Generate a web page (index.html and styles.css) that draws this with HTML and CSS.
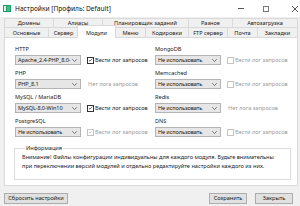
FILE: index.html
```html
<!DOCTYPE html>
<html lang="ru">
<head>
<meta charset="utf-8">
<title>Настройки</title>
<link rel="stylesheet" href="styles.css">
</head>
<body>
<div class="window">
  <div class="titlebar">
    <svg class="app-icon" viewBox="0 0 8 7" width="8" height="7">
      <rect x="0" y="0" width="8" height="7" fill="#1f9a6a"/>
      <rect x="1" y="1" width="2" height="5" fill="#dff3ea"/>
      <rect x="4" y="1" width="3" height="5" fill="#3cc08a"/>
    </svg>
    <span class="title">Настройки [Профиль: Default]</span>
    <div class="controls">
      <span class="ctl"><svg viewBox="0 0 6 1" width="6" height="1"><rect width="6" height="1" fill="#555"/></svg></span>
      <span class="ctl"><svg viewBox="0 0 6 6" width="6" height="6"><rect x="0.5" y="0.5" width="5" height="5" fill="none" stroke="#777" stroke-width="1"/></svg></span>
      <span class="ctl ctl-close"><svg viewBox="0 0 6 6" width="6" height="6"><path d="M0 0L6 6M6 0L0 6" stroke="#444" stroke-width="0.9"/></svg></span>
    </div>
  </div>

  <div class="client">
    <div class="tabs">
      <div class="tab-row row1">
        <div class="tab">Домены</div>
        <div class="tab">Алиасы</div>
        <div class="tab">Планировщик заданий</div>
        <div class="tab">Разное</div>
        <div class="tab">Автозагрузка</div>
      </div>
      <div class="tab-row row2">
        <div class="tab">Основные</div>
        <div class="tab">Сервер</div>
        <div class="tab active">Модули</div>
        <div class="tab">Меню</div>
        <div class="tab">Кодировки</div>
        <div class="tab">FTP сервер</div>
        <div class="tab">Почта</div>
        <div class="tab">Закладки</div>
      </div>
    </div>

    <div class="panel">
      <div class="modules">
        <div class="module">
          <div class="mod-label">HTTP</div>
          <div class="mod-row">
            <div class="select"><span>Apache_2.4-PHP_8.0-</span><svg class="chev" viewBox="0 0 5 3" width="5" height="3"><path d="M0.3 0.3L2.5 2.5L4.7 0.3" fill="none" stroke="#444" stroke-width="0.7"/></svg></div>
            <div class="check"><span class="box"><svg viewBox="0 0 7 7" width="7" height="7"><path d="M1.2 3.6L2.8 5.1L5.8 1.6" fill="none" stroke="#222" stroke-width="0.9"/></svg></span>Вести лог запросов</div>
          </div>
        </div>
        <div class="module">
          <div class="mod-label">PHP</div>
          <div class="mod-row">
            <div class="select"><span>PHP_8.1</span><svg class="chev" viewBox="0 0 5 3" width="5" height="3"><path d="M0.3 0.3L2.5 2.5L4.7 0.3" fill="none" stroke="#444" stroke-width="0.7"/></svg></div>
            <div class="note">Нет лога запросов</div>
          </div>
        </div>
        <div class="module">
          <div class="mod-label">MySQL / MariaDB</div>
          <div class="mod-row">
            <div class="select"><span>MySQL-8.0-Win10</span><svg class="chev" viewBox="0 0 5 3" width="5" height="3"><path d="M0.3 0.3L2.5 2.5L4.7 0.3" fill="none" stroke="#444" stroke-width="0.7"/></svg></div>
            <div class="check"><span class="box"><svg viewBox="0 0 7 7" width="7" height="7"><path d="M1.2 3.6L2.8 5.1L5.8 1.6" fill="none" stroke="#222" stroke-width="0.9"/></svg></span>Вести лог запросов</div>
          </div>
        </div>
        <div class="module">
          <div class="mod-label">PostgreSQL</div>
          <div class="mod-row">
            <div class="select"><span>Не использовать</span><svg class="chev" viewBox="0 0 5 3" width="5" height="3"><path d="M0.3 0.3L2.5 2.5L4.7 0.3" fill="none" stroke="#444" stroke-width="0.7"/></svg></div>
            <div class="check disabled"><span class="box"><svg viewBox="0 0 7 7" width="7" height="7"><path d="M1.2 3.6L2.8 5.1L5.8 1.6" fill="none" stroke="#aaa" stroke-width="0.9"/></svg></span>Вести лог запросов</div>
          </div>
        </div>

        <div class="module">
          <div class="mod-label">MongoDB</div>
          <div class="mod-row">
            <div class="select"><span>Не использовать</span><svg class="chev" viewBox="0 0 5 3" width="5" height="3"><path d="M0.3 0.3L2.5 2.5L4.7 0.3" fill="none" stroke="#444" stroke-width="0.7"/></svg></div>
            <div class="check disabled"><span class="box"></span>Вести лог запросов</div>
          </div>
        </div>
        <div class="module">
          <div class="mod-label">Memcached</div>
          <div class="mod-row">
            <div class="select"><span>Не использовать</span><svg class="chev" viewBox="0 0 5 3" width="5" height="3"><path d="M0.3 0.3L2.5 2.5L4.7 0.3" fill="none" stroke="#444" stroke-width="0.7"/></svg></div>
            <div class="check disabled"><span class="box"></span>Вести лог запросов</div>
          </div>
        </div>
        <div class="module">
          <div class="mod-label">Redis</div>
          <div class="mod-row">
            <div class="select"><span>Не использовать</span><svg class="chev" viewBox="0 0 5 3" width="5" height="3"><path d="M0.3 0.3L2.5 2.5L4.7 0.3" fill="none" stroke="#444" stroke-width="0.7"/></svg></div>
            <div class="note">Нет лога запросов</div>
          </div>
        </div>
        <div class="module">
          <div class="mod-label">DNS</div>
          <div class="mod-row">
            <div class="select"><span>Не использовать</span><svg class="chev" viewBox="0 0 5 3" width="5" height="3"><path d="M0.3 0.3L2.5 2.5L4.7 0.3" fill="none" stroke="#444" stroke-width="0.7"/></svg></div>
            <div class="check disabled"><span class="box"></span>Вести лог запросов</div>
          </div>
        </div>
      </div>

      <fieldset class="info">
        <legend>Информация</legend>
        <p>Внимание! Файлы конфигурации индивидуальны для каждого модуля. Будьте внимательны<br>при переключении версий модулей и отдельно редактируйте настройки каждого из них.</p>
      </fieldset>
    </div>

    <div class="footer">
      <button class="btn btn-reset">Сбросить настройки</button>
      <div class="footer-right">
        <button class="btn">Сохранить</button>
        <button class="btn">Закрыть</button>
      </div>
    </div>
  </div>
</div>
</body>
</html>
```

FILE: styles.css
```css
* { box-sizing: border-box; }

html, body {
  margin: 0;
  padding: 0;
}

body {
  width: 300px;
  height: 206px;
  overflow: hidden;
  background: #f0f0f0;
  font-family: "Noto Sans", "Open Sans", sans-serif;
  font-size: 5.6px;
  color: #1a1a1a;
}

.window {
  width: 300px;
  height: 206px;
  display: flex;
  flex-direction: column;
}

/* Title bar */
.titlebar {
  height: 17px;
  background: #ffffff;
  display: flex;
  align-items: center;
  flex: none;
}

.app-icon {
  margin: 0 4px 0 3px;
  flex: none;
}

.title {
  font-size: 6.6px;
  color: #111;
}

.controls {
  margin-left: auto;
  display: flex;
  height: 100%;
}

.ctl {
  width: 25px;
  display: flex;
  align-items: center;
  justify-content: center;
}

.ctl-close {
  width: 22px;
  justify-content: flex-end;
  padding-right: 2px;
}

/* Client */
.client {
  flex: 1;
  padding: 1px 2px 0 4px;
  display: flex;
  flex-direction: column;
}

.tabs {
  display: flex;
  flex-direction: column;
}

.tab-row {
  display: grid;
}

.row1 {
  grid-template-columns: 49px 49px 86px 44px 66px;
  height: 9px;
}

.row2 {
  grid-template-columns: 44px 30px 37px 30px 43px 39px 30px 41px;
  height: 10px;
}

.tab {
  display: flex;
  align-items: center;
  justify-content: center;
  border-top: 1px solid #d9d9d9;
  border-left: 1px solid #d9d9d9;
  background: #f0f0f0;
  white-space: nowrap;
  color: #1a1a1a;
}

.tab:last-child {
  border-right: 1px solid #d9d9d9;
}

.tab.active {
  position: relative;
  z-index: 1;
  background: #ffffff;
  margin: -2px -1px -1px -1px;
  border: 1px solid #d9d9d9;
  border-bottom: none;
  padding-top: 1px;
}

/* Panel */
.panel {
  background: #ffffff;
  border: 1px solid #d9d9d9;
  height: 149px;
  padding: 7px 0 0 10px;
  flex: none;
}

.modules {
  display: grid;
  grid-template-columns: 140px 140px;
  grid-template-rows: repeat(4, 24px);
  grid-auto-flow: column;
}

.mod-label {
  height: 9px;
  line-height: 9px;
  margin-bottom: 1px;
}

.mod-row {
  display: flex;
  align-items: center;
  height: 10px;
}

.select {
  width: 66px;
  height: 10px;
  border: 1px solid #b4b4b4;
  background: #e6e6e6;
  display: flex;
  align-items: center;
  justify-content: space-between;
  padding: 0 3px 0 2px;
  flex: none;
  white-space: nowrap;
}

.select span {
  letter-spacing: -0.12px;
}

.chev {
  flex: none;
  margin-left: 1px;
}

.check {
  display: flex;
  align-items: center;
  margin-left: 6px;
  white-space: nowrap;
}

.box {
  width: 7px;
  height: 7px;
  border: 1px solid #333;
  background: #fff;
  margin-right: 1px;
  flex: none;
  display: flex;
  align-items: center;
  justify-content: center;
}

.box svg {
  display: block;
  width: 6px;
  height: 6px;
}

.check.disabled {
  color: #9a9a9a;
}

.check.disabled .box {
  border-color: #c4c4c4;
}

.note {
  margin-left: 7px;
  color: #9a9a9a;
  white-space: nowrap;
}

/* Info group */
.info {
  margin: 3px 0 0 -1px;
  width: 277px;
  border: 1px solid #dcdcdc;
  padding: 1px 0 8px 7px;
  min-width: 0;
}

.info legend {
  padding: 0 1px;
  margin-left: 3px;
  line-height: 8px;
}

.info p {
  margin: 0;
  line-height: 9px;
  white-space: nowrap;
}

/* Footer */
.footer {
  display: flex;
  justify-content: space-between;
  padding: 7px 5px 0 0;
}

.footer-right {
  display: flex;
  gap: 8px;
}

.btn {
  font-family: inherit;
  font-size: 5.6px;
  color: #1a1a1a;
  height: 11px;
  padding: 0;
  border: 1px solid #adadad;
  background: #e1e1e1;
  width: 38px;
  line-height: 9px;
}

.btn-reset {
  width: 64px;
}
```
